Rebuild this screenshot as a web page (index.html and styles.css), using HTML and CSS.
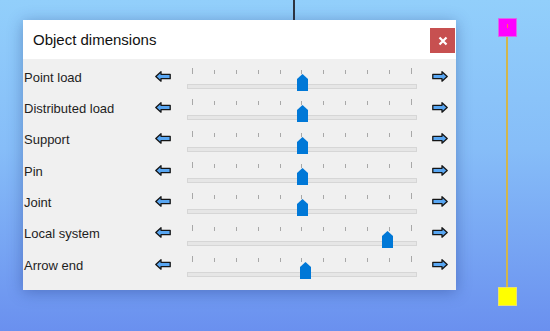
FILE: index.html
```html
<!DOCTYPE html>
<html lang="en">
<head>
  <meta charset="UTF-8" />
  <title>Object dimensions</title>
  <link rel="stylesheet" href="styles.css">
</head>
<body>
  <div class="canvas">
    <div class="wire wire-v"></div>
    <div class="wire wire-h"></div>
    <div class="member"></div>
    <div class="node node-top"><span class="dot"></span></div>
    <div class="node node-bottom"></div>

    <div class="dialog">
      <div class="dialog-head">
        <span class="dialog-title">Object dimensions</span>
        <button class="close" title="Close">
          <svg width="10" height="10" viewBox="0 0 10 10"><path d="M1.5 1.5 L8.5 8.5 M8.5 1.5 L1.5 8.5" stroke="#fff" stroke-width="2.2" /></svg>
        </button>
      </div>

      <div class="dialog-body" id="rows"></div>
    </div>
  </div>

  <script>
    const rows = [
      { name: 'Point load', value: 0.5 },
      { name: 'Distributed load', value: 0.5 },
      { name: 'Support', value: 0.5 },
      { name: 'Pin', value: 0.5 },
      { name: 'Joint', value: 0.5 },
      { name: 'Local system', value: 0.89 },
      { name: 'Arrow end', value: 0.515 }
    ];

    const arrowLeft = '<svg width="16" height="11" viewBox="0 0 16 11"><polygon points="0.8,5.5 6,0.8 6,3.3 15.2,3.3 15.2,7.7 6,7.7 6,10.2" fill="#58a6f2" stroke="#151515" stroke-width="1.3" stroke-linejoin="round"/></svg>';
    const arrowRight = '<svg width="16" height="11" viewBox="0 0 16 11"><polygon points="15.2,5.5 10,0.8 10,3.3 0.8,3.3 0.8,7.7 10,7.7 10,10.2" fill="#58a6f2" stroke="#151515" stroke-width="1.3" stroke-linejoin="round"/></svg>';
    const thumb = '<svg width="11" height="17" viewBox="0 0 11 17"><polygon points="0,5 5.5,0 11,5 11,17 0,17" fill="#0078d7"/></svg>';

    const box = document.getElementById('rows');
    rows.forEach(r => {
      let ticks = '';
      for (let i = 0; i < 11; i++) ticks += '<i></i>';
      // centre of thumb sits on the tick range 5px..225px of the slider
      const left = 5 + r.value * 219 - 5;
      box.insertAdjacentHTML('beforeend', `
        <div class="row">
          <span class="label">${r.name}</span>
          <span class="arrow">${arrowLeft}</span>
          <div class="slider">
            <div class="ticks">${ticks}</div>
            <div class="track"></div>
            <span class="thumb" style="left: ${left.toFixed(1)}px">${thumb}</span>
          </div>
          <span class="arrow">${arrowRight}</span>
        </div>`);
    });
  </script>
</body>
</html>
```

FILE: styles.css
```css
*, *::before, *::after { box-sizing: border-box; }
body {
  margin: 0;
  font-family: "Liberation Sans", Arial, sans-serif;
  overflow: hidden;
}
.canvas {
  position: relative;
  width: 550px;
  height: 331px;
  background: linear-gradient(to bottom, #92cffb 0%, #86bdf8 45%, #6a90ef 100%);
}
.wire {
  position: absolute;
  background-color: #2e3440;
}
.wire-v {
  left: 293px;
  top: 0;
  width: 2px;
  height: 21px;
}
.wire-h {
  left: 275px;
  top: 20px;
  width: 181px;
  height: 1px;
}
.member {
  position: absolute;
  left: 506px;
  top: 36px;
  width: 2px;
  height: 262px;
  background-color: #d2b64c;
}
.node {
  position: absolute;
  left: 498px;
  width: 19px;
  height: 19px;
}
.node-top {
  top: 18px;
  background-color: #ff00ff;
  border: 1px solid #d86ce8;
}
.node-top .dot {
  position: absolute;
  left: 8px;
  top: 5px;
  width: 1px;
  height: 4px;
  background-color: #ff7a3c;
}
.node-bottom {
  top: 287px;
  background-color: #ffff00;
  border: 1px solid #e8e070;
}
.dialog {
  position: absolute;
  left: 23px;
  top: 20px;
  width: 433px;
  height: 270px;
  background-color: #f0f0f0;
  box-shadow: 0 2px 14px rgba(20, 40, 110, 0.35);
}
.dialog-head {
  height: 39px;
  background-color: #fff;
  display: flex;
  align-items: center;
  justify-content: space-between;
  padding: 0 1px 0 10px;
}
.dialog-title {
  font-size: 15px;
  color: #111;
  padding-bottom: 1px;
}
.close {
  width: 25px;
  height: 25px;
  margin-top: 2px;
  border: none;
  padding: 0;
  background-color: #c75050;
  display: flex;
  align-items: center;
  justify-content: center;
  cursor: pointer;
}
.dialog-body {
  padding-top: 2px;
}
.row {
  height: 31.33px;
  display: flex;
  align-items: center;
  padding-left: 1px;
}
.label {
  width: 131px;
  font-size: 13px;
  color: #1e1e1e;
  padding-top: 1px;
}
.arrow {
  width: 16px;
  height: 11px;
  display: flex;
  margin-top: -1px;
}
.arrow svg { display: block; }
.slider {
  position: relative;
  width: 230px;
  height: 31px;
  margin: 0 15px 0 16px;
  padding-top: 7px;
}
.ticks {
  display: flex;
  justify-content: space-between;
  align-items: flex-end;
  margin: 0 5px;
  height: 6px;
}
.ticks i {
  width: 1px;
  height: 4px;
  background-color: #a8a8a8;
}
.ticks i:first-child,
.ticks i:last-child {
  height: 6px;
}
.track {
  margin-top: 10px;
  height: 5px;
  background-color: #e6e6e6;
  border: 1px solid #d6d6d6;
}
.thumb {
  position: absolute;
  top: 13px;
  width: 11px;
  height: 17px;
  display: block;
}
.thumb svg { display: block; }
```
